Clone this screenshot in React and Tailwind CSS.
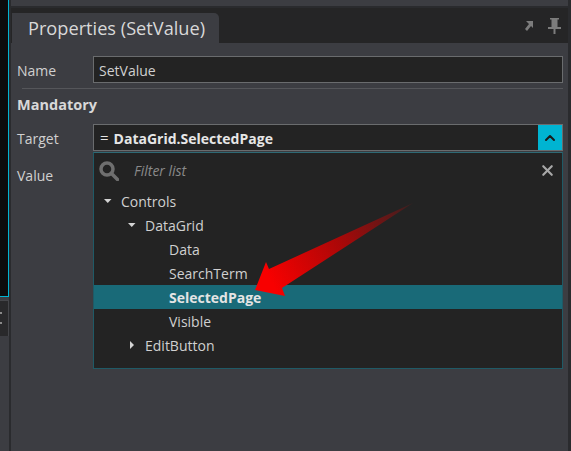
import { X, ChevronUp } from "lucide-react";

const treeRows = [
  { label: "Controls", indent: "pl-[27px]", arrow: "down" },
  { label: "DataGrid", indent: "pl-[51px]", arrow: "down" },
  { label: "Data", indent: "pl-[75px]" },
  { label: "SearchTerm", indent: "pl-[75px]" },
  { label: "SelectedPage", indent: "pl-[75px]", selected: true },
  { label: "Visible", indent: "pl-[75px]" },
  { label: "EditButton", indent: "pl-[51px]", arrow: "right" },
];

const Caret = ({ dir }) => (
  <svg width="8" height="8" viewBox="0 0 8 8" className="absolute left-[-17px] top-[8px]">
    {dir === "down" ? <path d="M0 2h7.5L3.75 6z" fill="#d4d4d4" /> : <path d="M2 0l4 4-4 4z" fill="#d4d4d4" />}
  </svg>
);

const App = () => {
  return (
    <div className="relative flex h-[451px] w-[571px] overflow-hidden bg-[#2a2b2e] text-[14px] text-[#d0d0d0] font-['Open_Sans',sans-serif]">
      {/* left neighbour panel */}
      <div className="flex w-[9px] shrink-0 flex-col bg-[#3c3d42]">
        <div className="h-[297px] border-r border-b border-[#00b4d2] bg-[#0c0c0c]"></div>
        <div className="mt-[3px] flex h-[36px] flex-col gap-[8px] border-t border-r border-[#45464a] bg-[#29292b] pt-[11px]">
          <div className="h-[2px] w-[2px] bg-[#8a8a8a]"></div>
          <div className="h-[2px] w-[2px] bg-[#8a8a8a]"></div>
        </div>
      </div>

      <div className="ml-[2px] flex min-w-0 flex-1 flex-col pr-[3px]">
        <div className="h-[7px] border-b border-[#2a2b2e] bg-[#3c3d42]"></div>
        <div className="mt-[1px] flex h-[35px] items-end justify-between bg-[#252526]">
          <div className="ml-[1px] flex h-[30px] w-[207px] items-center rounded-tr-[5px] bg-[#3c3d42] pl-[16px] text-[18.2px] leading-none text-[#d8d8d8]">
            Properties (SetValue)
          </div>
          <div className="flex items-center gap-[14px] self-center pr-[7px]">
            <svg width="9" height="10" viewBox="0 0 9 10">
              <path d="M1 0h7v7L6 5 2 10 0 8l4-5z" fill="#7c7c7c" />
            </svg>
            <svg width="13" height="16" viewBox="0 0 13 16">
              <path d="M2 0h9v1.500H9.500V9H13v2H7.500v5h-2v-5H0V9h3.500V1.500H2z" fill="#7c7c7c" />
            </svg>
          </div>
        </div>

        <div className="relative flex flex-1 flex-col bg-[#3c3d42] pl-[6px] pr-[5px]">
          <div className="mt-[13px] flex items-center">
            <span className="w-[76px] pt-[2px]">Name</span>
            <div className="flex h-[27px] flex-1 items-center border border-[#6a6c6e] bg-[#232323] pl-[5px] pt-[1px]">SetValue</div>
          </div>
          <div className="ml-[5px] mt-[5px] h-px bg-[#55565a]"></div>
          <div className="mt-[4px] text-[14.5px] font-bold leading-[24px] text-[#d8d8d8]">Mandatory</div>
          <div className="mt-[7px] flex items-center">
            <span className="w-[76px] pt-[2px]">Target</span>
            <div className="flex h-[27px] flex-1 items-center border border-[#6a6c6e] bg-[#232323] pl-[6px] font-bold text-[#e6e6e6]">
              <span className="mr-[5px] text-[15px] font-normal">=</span>
              <span className="pt-[1px]">DataGrid.SelectedPage</span>
              <div className="ml-auto flex h-[25px] w-[25px] items-center justify-center border-l border-[#232323] bg-[#00b4d2]">
                <ChevronUp size={16} strokeWidth={3} color="#1a1a1a" />
              </div>
            </div>
          </div>
          <div className="mt-[15px] leading-[20px]">Value</div>

          {/* dropdown list */}
          <div className="absolute left-[82px] top-[109px] h-[217px] w-[470px] border border-[#1f5a66] border-t-[#2f6a75] bg-[#232323]">
            <div className="flex h-[35px] items-center pl-[5px] pr-[6px]">
              <svg width="20" height="20" viewBox="0 0 20 20">
                <circle cx="8" cy="8" r="6" fill="none" stroke="#6f6f6f" strokeWidth="3.500" />
                <path d="M12.500 12.500L18.500 18.500" stroke="#6f6f6f" strokeWidth="3.500" strokeLinecap="round" />
              </svg>
              <span className="ml-[15px] italic text-[#8a8a8a]">Filter list</span>
              <X size={17} strokeWidth={3} color="#a8a8a8" className="ml-auto" />
            </div>
            <div className="mt-[1px] flex flex-col">
              {treeRows.map((row) => (
                <div
                  key={row.label}
                  className={`h-[24px] leading-[26px] ${row.indent} ${row.selected ? "bg-[#196a78] font-bold text-[#e4e4e4]" : ""}`}
                >
                  <span className="relative inline-block">
                    {row.arrow && <Caret dir={row.arrow} />}
                    {row.label}
                  </span>
                </div>
              ))}
            </div>
          </div>
        </div>
      </div>

      {/* red callout arrow */}
      <svg width="180" height="105" viewBox="0 0 180 105" className="absolute left-[245px] top-[200px]">
        <defs>
          <linearGradient id="arrowFill" gradientUnits="userSpaceOnUse" x1="10" y1="90" x2="168" y2="3">
            <stop offset="0.1" stopColor="#f80000" />
            <stop offset="0.55" stopColor="#a80808" />
            <stop offset="1" stopColor="#3a2020" />
          </linearGradient>
        </defs>
        <path d="M168 3 L24 69 L21 62 L10 90 L40 96 L37 88 Z" fill="url(#arrowFill)" />
      </svg>
    </div>
  );
};

export default App;
